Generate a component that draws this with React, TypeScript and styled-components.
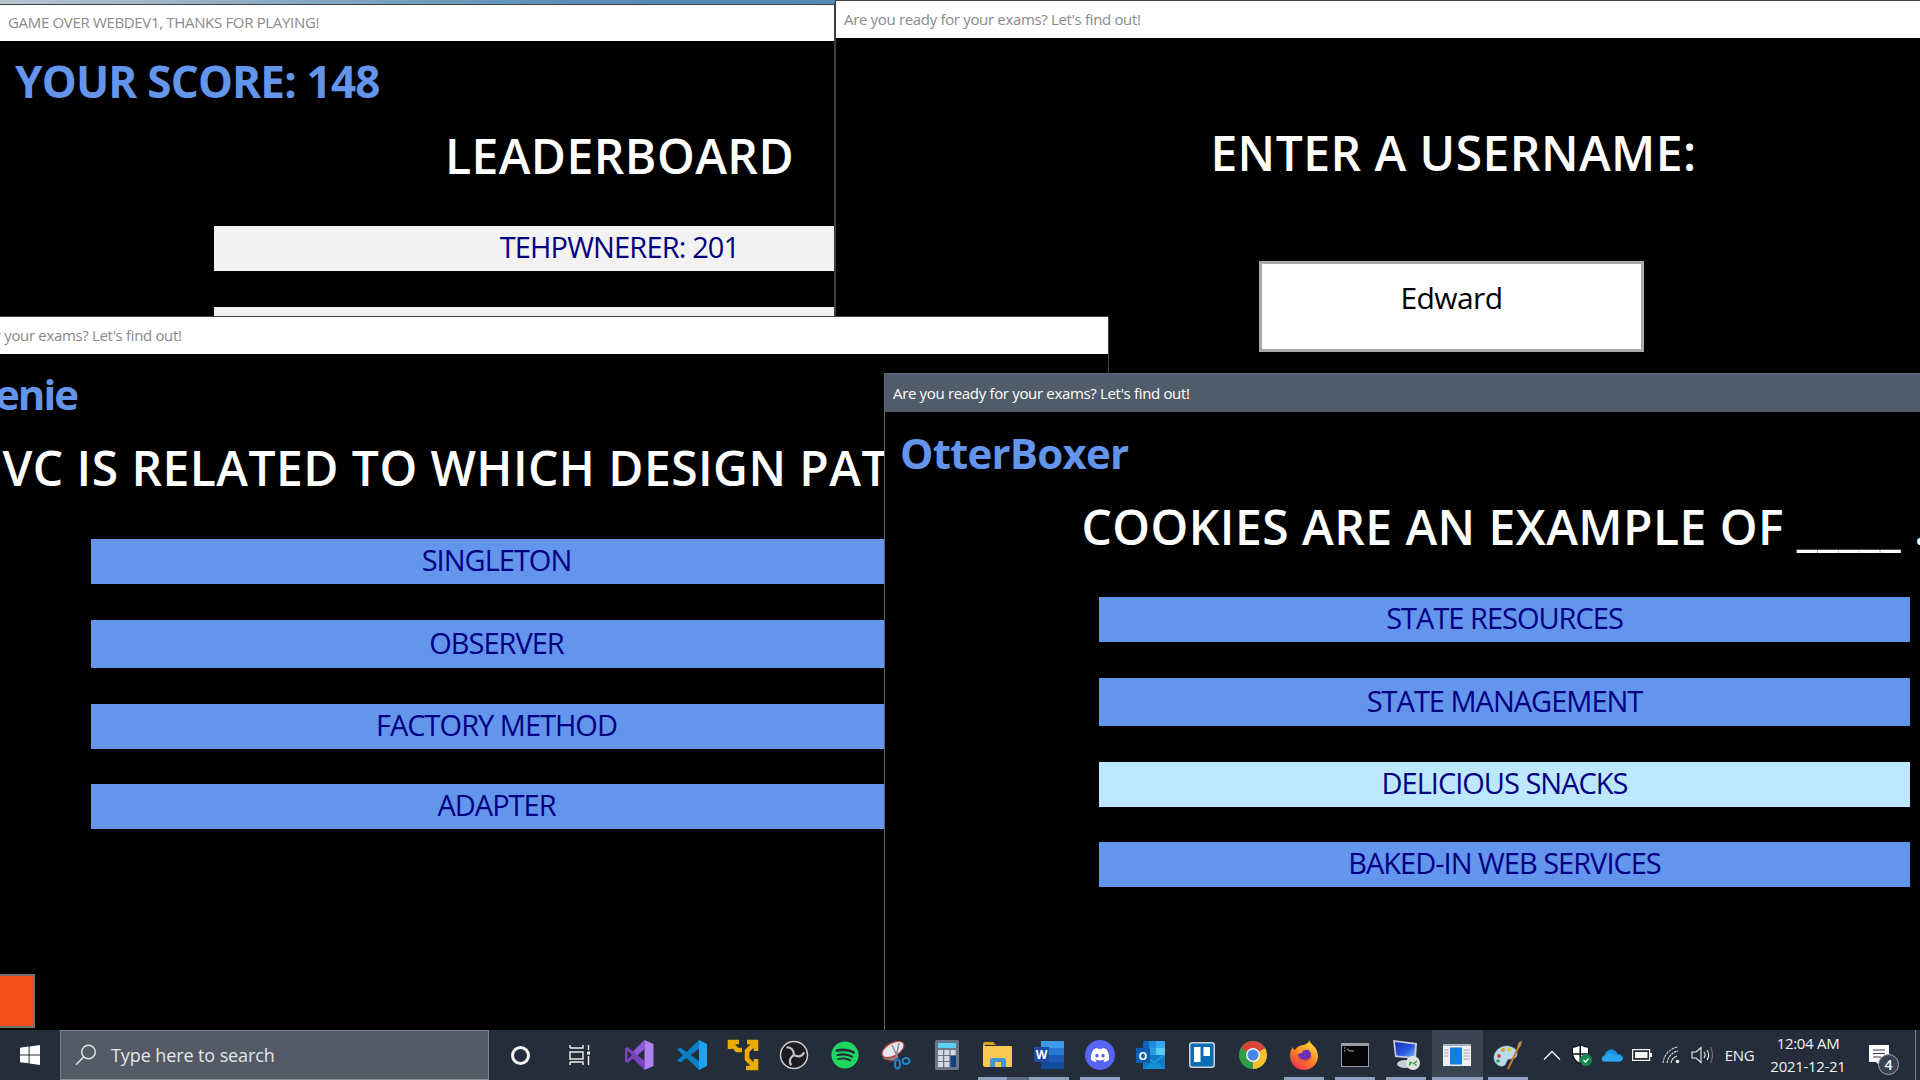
import React from 'react';
import styled, { createGlobalStyle } from 'styled-components';
import { FaDiscord, FaSpotify } from 'react-icons/fa';

const UI_FONT = '"Open Sans", "Noto Sans", "Liberation Sans", sans-serif';

const GlobalStyle = createGlobalStyle`
    html, body {
        margin: 0;
        padding: 0;
        background: #000;
        overflow: hidden;
    }
    * {
        box-sizing: border-box;
    }
`;

const App = () => {
    const pinnedApps = [
        { name: 'vs', icon: <VisualStudioIcon /> },
        { name: 'code', icon: <VsCodeIcon /> },
        { name: 'vagrant', icon: <BracketIcon /> },
        { name: 'obs', icon: <ObsIcon /> },
        { name: 'spotify', icon: <FaSpotify size={28} color="#1ed760" /> },
        { name: 'snip', icon: <SnipIcon /> },
        { name: 'calc', icon: <CalcIcon /> },
        { name: 'explorer', icon: <FolderIcon />, open: true, stacked: true },
        { name: 'word', icon: <WordIcon />, open: true },
        {
            name: 'discord',
            icon: (
                <DiscordBadge>
                    <FaDiscord size={20} color="#fff" />
                </DiscordBadge>
            ),
            open: true,
        },
        { name: 'outlook', icon: <OutlookIcon /> },
        { name: 'trello', icon: <TrelloIcon /> },
        { name: 'chrome', icon: <ChromeIcon /> },
        { name: 'firefox', icon: <FirefoxIcon />, open: true },
        { name: 'terminal', icon: <TerminalIcon />, open: true },
        { name: 'rdp', icon: <RemoteIcon />, open: true },
        { name: 'app', icon: <AppWindowIcon />, open: true, active: true },
        { name: 'paint', icon: <PaintIcon />, open: true },
    ];

    return (
        <>
            <GlobalStyle />
            <Page>
                <Desktop>
                    <Wallpaper />

                    <Window $left={-1} $top={4} $width={836} $height={330} $z={1}>
                        <TitleBar $height={36}>GAME OVER WEBDEV1, THANKS FOR PLAYING!</TitleBar>
                        <Player $top={10} $size={44}>YOUR SCORE: 148</Player>
                        <Column>
                            <Heading $top={12}>LEADERBOARD</Heading>
                            <ScoreRow $top={37}>TEHPWNERER: 201</ScoreRow>
                            <ScoreRow $top={36} />
                        </Column>
                    </Window>

                    <Window $left={835} $top={0} $width={1090} $height={400} $z={2}>
                        <TitleBar $height={37}>Are you ready for your exams? Let&apos;s find out!</TitleBar>
                        <Column $offset={212}>
                            <Heading $top={82}>ENTER A USERNAME:</Heading>
                            <UsernameBox>Edward</UsernameBox>
                        </Column>
                    </Window>

                    <Window $left={-124} $top={316} $width={1233} $height={720} $z={3}>
                        <TitleBar $height={37}>Are you ready for your exams? Let&apos;s find out!</TitleBar>
                        <Player $top={10} $indent={118} $spacing={-2}>enie</Player>
                        <Column>
                            <Heading $top={11}>MVC IS RELATED TO WHICH DESIGN PATTERN?</Heading>
                            <Answers $top={38}>
                                <Answer>SINGLETON</Answer>
                                <Answer $tall>OBSERVER</Answer>
                                <Answer>FACTORY METHOD</Answer>
                                <Answer>ADAPTER</Answer>
                            </Answers>
                        </Column>
                        <TimerBlock />
                    </Window>

                    <Window $left={884} $top={373} $width={1040} $height={670} $z={4} $focused>
                        <TitleBar $height={38} $focused>Are you ready for your exams? Let&apos;s find out!</TitleBar>
                        <Player $top={11}>OtterBoxer</Player>
                        <Column>
                            <Heading $top={11}>COOKIES ARE AN EXAMPLE OF _____ .</Heading>
                            <Answers $top={37}>
                                <Answer>STATE RESOURCES</Answer>
                                <Answer $tall>STATE MANAGEMENT</Answer>
                                <Answer $hovered>DELICIOUS SNACKS</Answer>
                                <Answer>BAKED-IN WEB SERVICES</Answer>
                            </Answers>
                        </Column>
                    </Window>
                </Desktop>

                <Taskbar>
                    <StartButton>
                        <WindowsIcon />
                    </StartButton>
                    <SearchBox>
                        <SearchIcon />
                        <span>Type here to search</span>
                    </SearchBox>
                    <ShellSlot $width={62}>
                        <CortanaRing />
                    </ShellSlot>
                    <ShellSlot $width={58}>
                        <TaskViewIcon />
                    </ShellSlot>
                    <PinnedApps>
                        {pinnedApps.map((app) => (
                            <AppSlot key={app.name} $open={app.open} $active={app.active} $stacked={app.stacked}>
                                {app.icon}
                            </AppSlot>
                        ))}
                    </PinnedApps>
                    <Tray>
                        <TraySlot><ChevronIcon /></TraySlot>
                        <TraySlot><ShieldIcon /></TraySlot>
                        <TraySlot><OneDriveIcon /></TraySlot>
                        <TraySlot><BatteryIcon /></TraySlot>
                        <TraySlot><WifiIcon /></TraySlot>
                        <TraySlot><VolumeIcon /></TraySlot>
                        <Language>ENG</Language>
                        <Clock>
                            <span>12:04 AM</span>
                            <span>2021-12-21</span>
                        </Clock>
                        <Notifications>
                            <NotificationIcon />
                            <NotificationCount>4</NotificationCount>
                        </Notifications>
                        <ShowDesktop />
                    </Tray>
                </Taskbar>
            </Page>
        </>
    );
};

export default App;

function WindowsIcon() {
    return (
        <svg width="20" height="20" viewBox="0 0 20 20" fill="#fff">
            <path d="M0 2.8 8.6 1.6V9.4H0ZM9.6 1.5 20 0V9.4H9.6ZM0 10.4H8.6V18.3L0 17.2ZM9.6 10.4H20V20L9.6 18.5Z" />
        </svg>
    );
}

function SearchIcon() {
    return (
        <svg width="22" height="22" viewBox="0 0 22 22" fill="none" stroke="#e6e8eb" strokeWidth="1.4">
            <circle cx="13.5" cy="8" r="6.8" />
            <path d="M8.6 13 1 20.8" />
        </svg>
    );
}

function TaskViewIcon() {
    return (
        <svg width="22" height="20" viewBox="0 0 22 20" fill="none" stroke="#f2f2f2" strokeWidth="1.4">
            <path d="M1 3H14V0M1 3V0M1 17H14V20M1 17V20" />
            <rect x="1" y="7" width="13" height="7" />
            <path d="M19.5 0V5M19.5 11V20" />
            <rect x="18" y="6.5" width="3" height="3" fill="#f2f2f2" stroke="none" />
        </svg>
    );
}

function VisualStudioIcon() {
    return (
        <svg width="32" height="32" viewBox="2.5 0 32 32">
            <path d="M22 1 10.5 12.5 5 8 1 10V22L5 24 10.5 19.5 22 31 22 22 15 16 22 10Z" fill="#7a43c0" />
            <path d="M5 11.5V20.5L9.5 16Z" fill="#252d3a" />
            <path d="M22 1 31 5V27L22 31Z" fill="#b07ff0" />
            <path d="M22 1 22 10 15 16 10.5 12.5Z" fill="#8e5bd8" />
        </svg>
    );
}

function VsCodeIcon() {
    return (
        <svg width="32" height="32" viewBox="0 0 32 32">
            <path d="M23 1 10.5 13 4.5 8.5 1 10.5 7 16 1 21.5 4.5 23.5 10.5 19 23 31V22L14.5 16 23 10Z" fill="#0a7fc6" />
            <path d="M23 1 31 5V27L23 31Z" fill="#1fa3f0" />
        </svg>
    );
}

function BracketIcon() {
    return (
        <svg width="32" height="32" viewBox="0 0 32 32" fill="none" stroke="#e8ad00" strokeWidth="4.6">
            <path d="M3 10V3H12M4 4 10 11H15" />
            <path d="M20 3H29V12M28 4 20 12V20L28 28" />
            <path d="M19 29H29V20" />
        </svg>
    );
}

function ObsIcon() {
    const blade = 'M15 15C15 10 12 7 7.5 7.5';
    return (
        <svg width="30" height="30" viewBox="0 0 30 30" fill="none">
            <circle cx="15" cy="15" r="13.5" fill="#1c1b1f" stroke="#cfcfcf" strokeWidth="1.5" />
            <path d={blade} stroke="#c4c4c8" strokeWidth="2.2" />
            <path d={blade} stroke="#c4c4c8" strokeWidth="2.2" transform="rotate(120 15 15)" />
            <path d={blade} stroke="#c4c4c8" strokeWidth="2.2" transform="rotate(240 15 15)" />
        </svg>
    );
}

function SnipIcon() {
    return (
        <svg width="30" height="30" viewBox="0 0 30 30" fill="none">
            <path d="M1 14 3 19 12 21 17 17Z" fill="#85858a" stroke="#b84a4a" strokeWidth="0.8" />
            <ellipse cx="12" cy="9.5" rx="12" ry="6.5" transform="rotate(-30 12 9.5)" fill="#e4e6ea" stroke="#c93b3b" strokeWidth="1.2" />
            <path d="M11 5 17 18M18 3 15 17" stroke="#8a8d92" strokeWidth="1.5" />
            <ellipse cx="16.5" cy="24" rx="2.5" ry="4.5" stroke="#1f86c8" strokeWidth="2" />
            <ellipse cx="25" cy="21" rx="3.5" ry="3" stroke="#1f86c8" strokeWidth="2" />
        </svg>
    );
}

function CalcIcon() {
    return (
        <svg width="24" height="30" viewBox="0 0 24 30">
            <rect width="24" height="30" rx="1.5" fill="#6b7684" />
            <rect x="3" y="3" width="18" height="5" fill="#5ad0f0" />
            {[0, 1, 2].map((row) =>
                [0, 1, 2].map((col) =>
                    col === 2 && row > 0 ? null : (
                        <rect key={`${row}-${col}`} x={3 + col * 6.3} y={10 + row * 6} width="5" height="5" fill="#d4dae0" />
                    ),
                ),
            )}
            <rect x="15.6" y="16" width="5.4" height="11" fill="#123f86" />
        </svg>
    );
}

function FolderIcon() {
    return (
        <svg width="30" height="28" viewBox="0 0 30 28">
            <path d="M0 3Q0 1 2 1H10L13 4H2V6H0Z" fill="#dba122" />
            <path d="M0 5H28Q29 5 29 6V25Q29 26 28 26H2Q0 26 0 24Z" fill="#f7c950" />
            <path d="M7 26V19Q7 17 9 17H21Q23 17 23 19V26H18V21H12V26Z" fill="#3f95d8" />
        </svg>
    );
}

function WordIcon() {
    return (
        <svg width="30" height="30" viewBox="0 0 30 30">
            <rect x="7" y="1" width="23" height="7" fill="#3f9be8" />
            <rect x="7" y="8" width="23" height="7" fill="#2a78d4" />
            <rect x="7" y="15" width="23" height="7" fill="#1a5cb5" />
            <rect x="7" y="22" width="23" height="7" fill="#124a9a" />
            <rect x="0" y="7" width="15" height="15" fill="#1b4ea2" />
            <text x="7.5" y="19" textAnchor="middle" fontSize="12" fontWeight="700" fontFamily={UI_FONT} fill="#fff">W</text>
        </svg>
    );
}

function OutlookIcon() {
    return (
        <svg width="30" height="30" viewBox="0 0 30 30">
            <rect x="7" y="1" width="20" height="15" fill="#0c64b8" />
            <rect x="13" y="1" width="7" height="7" fill="#1c8ce0" />
            <rect x="20" y="1" width="9" height="7" fill="#32a8ee" />
            <rect x="20" y="8" width="9" height="7" fill="#58cdf4" />
            <rect x="13" y="8" width="7" height="7" fill="#2a9be4" />
            <path d="M7 15 29 15V29H7Z" fill="#0f7cc9" />
            <path d="M7 15 18 23 29 15V14L18 22 7 14Z" fill="#37b4ee" />
            <path d="M7 29 18 21 29 29Z" fill="#1490df" />
            <rect x="0" y="8" width="14" height="15" fill="#0a5db0" />
            <text x="7" y="20" textAnchor="middle" fontSize="11" fontWeight="700" fontFamily={UI_FONT} fill="#fff">O</text>
        </svg>
    );
}

function TrelloIcon() {
    return (
        <svg width="26" height="26" viewBox="0 0 26 26">
            <rect x="0.75" y="0.75" width="24.5" height="24.5" rx="2.5" fill="#0a6cb4" stroke="#cbd1d8" strokeWidth="1.5" />
            <rect x="5" y="5" width="6.5" height="15" fill="#fff" />
            <rect x="14.5" y="5" width="6.5" height="9" fill="#fff" />
        </svg>
    );
}

function ChromeIcon() {
    return (
        <svg width="28" height="28" viewBox="0 0 28 28">
            <circle cx="14" cy="14" r="14" fill="#2f9e4a" />
            <path d="M14 14 26.1 7A14 14 0 0 1 14 28Z" fill="#fbc02d" />
            <path d="M14 14 1.9 7A14 14 0 0 1 26.1 7Z" fill="#db4437" />
            <circle cx="14" cy="14" r="7" fill="#f1f3f4" />
            <circle cx="14" cy="14" r="5.5" fill="#4a86e8" />
        </svg>
    );
}

function FirefoxIcon() {
    return (
        <svg width="30" height="30" viewBox="0 0 30 30">
            <defs>
                <linearGradient id="foxFlame" x1="0.8" y1="0" x2="0.2" y2="1">
                    <stop offset="0" stopColor="#ffdf3a" />
                    <stop offset="0.5" stopColor="#ff8a25" />
                    <stop offset="1" stopColor="#f0274f" />
                </linearGradient>
            </defs>
            <path d="M20 0C21 4 29 7 29 16A14 14 0 0 1 1 16C1 12 2 9 4 7 4 9 5 10 6 10 8 6 13 5 15 5 17 4 20 3 20 0Z" fill="url(#foxFlame)" />
            <circle cx="15.5" cy="15" r="6.5" fill="#6b2fb3" />
            <path d="M9 9C11 7 16 7 20 10 16 9 13 11 13 13L8 14Z" fill="#ff9a2e" />
            <path d="M8 14C10 21 19 22 23 16 22 24 9 25 8 14Z" fill="#ff5a2c" />
        </svg>
    );
}

function TerminalIcon() {
    return (
        <svg width="28" height="24" viewBox="0 0 28 24">
            <rect width="28" height="24" fill="#9a9ca0" />
            <rect x="1" y="3" width="26" height="20" fill="#050505" />
            <path d="M3 5H4.5M3 8H4.5M6 6 9 8H13" stroke="#b8b8b8" fill="none" />
        </svg>
    );
}

function RemoteIcon() {
    return (
        <svg width="30" height="32" viewBox="0 0 30 32">
            <defs>
                <linearGradient id="rdpScreen" x1="0" y1="0" x2="1" y2="1">
                    <stop offset="0" stopColor="#1a2bb8" />
                    <stop offset="0.6" stopColor="#2c5de0" />
                    <stop offset="1" stopColor="#7fb3f5" />
                </linearGradient>
            </defs>
            <path d="M2 1 26 4 25 20 4 18Z" fill="#c5ccd6" />
            <path d="M4 3 24 5.5 23 18 5.5 16.5Z" fill="url(#rdpScreen)" />
            <ellipse cx="14" cy="25" rx="8" ry="4" fill="#c9ced3" />
            <circle cx="22" cy="24" r="7" fill="#dfe3de" />
            <path d="M18 26 21 23M22 25 26 22M18.5 23 20 25M24 25 25.5 26.5" stroke="#1f9e3f" strokeWidth="1.4" fill="none" />
        </svg>
    );
}

function AppWindowIcon() {
    return (
        <svg width="28" height="22" viewBox="0 0 28 22">
            <rect width="28" height="22" fill="#eef1f4" />
            <rect width="28" height="2" fill="#a8afb8" />
            <rect x="7" y="3.5" width="12" height="17" fill="#0f7fe0" />
            <path d="M1.5 6H5.5M1.5 9H5.5M1.5 12H5.5M20.5 6H26.5M20.5 9H26.5M20.5 12H26.5M20.5 15H26.5" stroke="#9aa2ab" fill="none" />
        </svg>
    );
}

function PaintIcon() {
    return (
        <svg width="30" height="30" viewBox="0 0 30 30">
            <path d="M1 19C0 11 8 5 15 6 21 7 25 10 24 15 23 19 19 19 16 19 13 20 14 23 12 25 8 28 2 25 1 19Z" fill="#b8dcec" stroke="#7aa6bb" strokeWidth="0.6" />
            <circle cx="6" cy="16" r="2" fill="#d94a3c" />
            <circle cx="10" cy="10" r="2" fill="#e8a020" />
            <circle cx="16" cy="9.5" r="2" fill="#e8c820" />
            <circle cx="5" cy="21" r="1.8" fill="#3ca050" />
            <path d="M15 29 26 6" stroke="#c97a20" strokeWidth="2" />
            <path d="M24 7 26 2 29 1 28 6 26 8Z" fill="#b58a5a" />
        </svg>
    );
}

function ChevronIcon() {
    return (
        <svg width="18" height="10" viewBox="0 0 18 10" fill="none" stroke="#f2f2f2" strokeWidth="1.3">
            <path d="M1 9.5 9 1.5 17 9.5" />
        </svg>
    );
}

function ShieldIcon() {
    return (
        <svg width="22" height="24" viewBox="0 0 22 24">
            <path d="M9.5 1C7 3 4 3.5 1 3.5V11C1 16 5 19.5 9.5 21.5 14 19.5 18 16 18 11V3.5C15 3.5 12 3 9.5 1Z" fill="#111" />
            <path d="M9 2.5C7 3.8 5 4.5 2 4.8V10.5H9ZM10 11.5V20C13 18.5 16 15.5 17 11.5Z" fill="#fff" />
            <path d="M2.2 11.5C3 15.5 6 18.5 9 20V11.5ZM10 10.5H17V4.8C14 4.5 12 3.8 10 2.5Z" fill="#fff" />
            <path d="M9 1V21M1 11H18" stroke="#111" strokeWidth="1" />
            <circle cx="15" cy="17" r="6" fill="#128a4c" />
            <path d="M12.5 17 14.5 19 17.5 15.5" stroke="#fff" strokeWidth="1.3" fill="none" />
        </svg>
    );
}

function OneDriveIcon() {
    return (
        <svg width="22" height="14" viewBox="0 0 22 14">
            <path d="M3.5 13.5C0 13.5-.5 8 3.5 7.5 4.5 3.5 8 1 11.5 1.5 14 2 16 4 16.5 6 20 6 22 8.5 21.8 10.5 21.6 12.5 20 13.5 18.5 13.5Z" fill="#1a8fe0" />
            <path d="M7 6C9 4 13 5 14 7.5 17 7 20.5 8 21.8 10 21.6 12.5 20 13.5 18.5 13.5H3.5C1 13.5.5 11 1 10 3 8.5 5 7.5 7 6Z" fill="#2aa4ef" />
        </svg>
    );
}

function BatteryIcon() {
    return (
        <svg width="20" height="12" viewBox="0 0 20 12">
            <rect x="0.6" y="0.6" width="17" height="10.8" fill="none" stroke="#f2f2f2" strokeWidth="1.2" />
            <rect x="3" y="3" width="12.5" height="6" fill="#f2f2f2" />
            <rect x="18" y="4" width="2" height="4" fill="#f2f2f2" />
        </svg>
    );
}

function WifiIcon() {
    return (
        <svg width="20" height="20" viewBox="0 0 20 20" fill="none" stroke="#e2e4e7" strokeWidth="1.1">
            <path d="M1 18C2 9 9 3 16 2" strokeDasharray="2.5 0.8" />
            <path d="M5 18C6 12 10 7 16 6" strokeDasharray="2.5 0.8" />
            <path d="M9 18C9.5 15 12 12 15 11" />
            <circle cx="15.5" cy="16.5" r="1.8" fill="#e2e4e7" stroke="none" />
        </svg>
    );
}

function VolumeIcon() {
    return (
        <svg width="22" height="18" viewBox="0 0 22 18" fill="none" stroke="#eceef0" strokeWidth="1.1">
            <path d="M1 6H5L10 1.5V16.5L5 12H1Z" />
            <path d="M13 6C14.5 8 14.5 10 13 12" />
            <path d="M16 4C18 7 18 11 16 14" />
            <path d="M19.5 1C22 6 22 12 19.5 17" stroke="#6f7680" />
        </svg>
    );
}

function NotificationIcon() {
    return (
        <svg width="20" height="20" viewBox="0 0 20 20">
            <path d="M0 0H20V17H10V20L7 17H0Z" fill="#fff" />
            <path d="M4 5H16M4 8.5H16M4 12H12" stroke="#3a3f48" strokeWidth="1.2" />
        </svg>
    );
}

const Page = styled.div`
    width: 1920px;
    height: 1080px;
    display: flex;
    flex-direction: column;
    font-family: ${UI_FONT};
    overflow: hidden;
`;

const Desktop = styled.div`
    position: relative;
    flex: 1;
    background: #000;
    overflow: hidden;
`;

const Wallpaper = styled.div`
    height: 4px;
    background: linear-gradient(90deg, #b9c6cf, #5a8db8 30%, #4c86b6 60%, #7f9cb5);
`;

const Window = styled.section<{ $left: number; $top: number; $width: number; $height: number; $z: number; $focused?: boolean }>`
    position: absolute;
    left: ${(p) => p.$left}px;
    top: ${(p) => p.$top}px;
    width: ${(p) => p.$width}px;
    height: ${(p) => p.$height}px;
    z-index: ${(p) => p.$z};
    background: #000;
    border: 1px solid ${(p) => (p.$focused ? '#5e6873' : '#3c3f44')};
    overflow: hidden;
`;

const TitleBar = styled.header<{ $height: number; $focused?: boolean }>`
    height: ${(p) => p.$height}px;
    display: flex;
    align-items: center;
    padding-left: 8px;
    padding-bottom: ${(p) => (p.$focused ? 0 : 2)}px;
    font-size: 15px;
    letter-spacing: -0.33px;
    background: ${(p) => (p.$focused ? '#505c6a' : '#fff')};
    color: ${(p) => (p.$focused ? '#fff' : '#8a8a8a')};
`;

const Player = styled.div<{ $top: number; $indent?: number; $size?: number; $spacing?: number }>`
    margin-top: ${(p) => p.$top}px;
    padding-left: ${(p) => p.$indent ?? 15}px;
    font-size: ${(p) => p.$size ?? 42}px;
    line-height: 60px;
    font-weight: 700;
    color: #6495ed;
    letter-spacing: ${(p) => p.$spacing ?? -0.8}px;
    white-space: nowrap;
`;

const Column = styled.div<{ $offset?: number }>`
    width: 811px;
    margin-left: ${(p) => p.$offset ?? 214}px;
    display: flex;
    flex-direction: column;
`;

const Heading = styled.h1<{ $top: number }>`
    display: flex;
    justify-content: center;
    margin: ${(p) => p.$top}px 0 0;
    font-size: 48px;
    line-height: 66px;
    font-weight: 600;
    letter-spacing: 0.45px;
    color: #fff;
    white-space: nowrap;
`;

const ScoreRow = styled.div<{ $top: number }>`
    height: 45px;
    margin-top: ${(p) => p.$top}px;
    padding-bottom: 4px;
    display: flex;
    align-items: center;
    justify-content: center;
    background: #f2f2f2;
    color: #000080;
    font-size: 29px;
    letter-spacing: -0.85px;
`;

const UsernameBox = styled.div`
    width: 385px;
    height: 91px;
    margin-top: 75px;
    align-self: center;
    margin-right: 4px;
    padding-bottom: 18px;
    display: flex;
    align-items: center;
    justify-content: center;
    background: #fff;
    border: 3px solid #a9a9a9;
    color: #000;
    font-size: 30px;
    letter-spacing: -0.6px;
`;

const Answers = styled.div<{ $top: number }>`
    margin-top: ${(p) => p.$top}px;
    display: flex;
    flex-direction: column;
    gap: 35px;
`;

const Answer = styled.button<{ $tall?: boolean; $hovered?: boolean }>`
    height: ${(p) => (p.$tall ? 48 : 45)}px;
    padding: 0 0 4px;
    border: none;
    display: flex;
    align-items: center;
    justify-content: center;
    background: ${(p) => (p.$hovered ? '#bde7fd' : '#6495ed')};
    color: #000080;
    font-family: inherit;
    font-size: 29px;
    letter-spacing: -1px;
    &:nth-child(-n + 2) {
        margin-bottom: 1px;
    }
`;

const TimerBlock = styled.div`
    position: absolute;
    left: 100px;
    top: 657px;
    width: 58px;
    height: 54px;
    background: #f4511e;
    border: 2px solid #77706c;
`;

const Taskbar = styled.footer`
    height: 50px;
    display: flex;
    align-items: stretch;
    background: #252d3a;
    color: #f2f2f2;
    position: relative;
    z-index: 10;
`;

const StartButton = styled.div`
    width: 60px;
    display: flex;
    align-items: center;
    justify-content: center;
`;

const SearchBox = styled.div`
    width: 429px;
    display: flex;
    align-items: center;
    gap: 14px;
    padding-left: 14px;
    background: #535a65;
    border: 1px solid #7b8089;
    border-bottom-color: #8a8f97;
    color: #e3e6ea;
    font-size: 18px;
    letter-spacing: -0.1px;
`;

const ShellSlot = styled.div<{ $width: number }>`
    width: ${(p) => p.$width}px;
    display: flex;
    align-items: center;
    justify-content: center;
`;

const CortanaRing = styled.div`
    width: 19px;
    height: 19px;
    border: 3px solid #f4f4f4;
    border-radius: 50%;
`;

const PinnedApps = styled.div`
    margin-left: 6.5px;
    display: flex;
`;

const AppSlot = styled.div<{ $open?: boolean; $active?: boolean; $stacked?: boolean }>`
    position: relative;
    width: 51px;
    display: flex;
    align-items: center;
    justify-content: center;
    background: ${(p) => (p.$active ? '#3a4452' : 'transparent')};
    &::after {
        content: '';
        display: ${(p) => (p.$open ? 'block' : 'none')};
        position: absolute;
        bottom: 0;
        left: ${(p) => (p.$active ? 0 : 5.5)}px;
        right: ${(p) => (p.$active ? 0 : p.$stacked ? -5 : 5.5)}px;
        height: 3px;
        background: ${(p) =>
            p.$stacked ? 'linear-gradient(90deg, #8ea0bc 0 29px, #5d6a7d 29px)' : '#8ea0bc'};
    }
`;

const DiscordBadge = styled.div`
    width: 30px;
    height: 30px;
    border-radius: 50%;
    background: #5865f2;
    display: flex;
    align-items: center;
    justify-content: center;
`;

const Tray = styled.div`
    margin-left: 3.5px;
    display: flex;
    flex: 1;
    align-items: stretch;
`;

const TraySlot = styled.div`
    width: 30px;
    display: flex;
    align-items: center;
    justify-content: center;
`;

const Language = styled.div`
    width: 45px;
    display: flex;
    align-items: center;
    justify-content: center;
    font-size: 15px;
    letter-spacing: -0.3px;
`;

const Clock = styled.div`
    width: 92px;
    display: flex;
    flex-direction: column;
    align-items: center;
    justify-content: center;
    font-size: 15px;
    line-height: 23px;
    letter-spacing: -0.3px;
`;

const Notifications = styled.div`
    position: relative;
    width: 61px;
    padding: 15px 0 0 15px;
`;

const NotificationCount = styled.span`
    position: absolute;
    left: 24px;
    top: 24px;
    width: 21px;
    height: 21px;
    display: flex;
    align-items: center;
    justify-content: center;
    border-radius: 50%;
    background: #3a4250;
    border: 1px solid #a5aab2;
    color: #fff;
    font-size: 14px;
    font-weight: 600;
`;

const ShowDesktop = styled.div`
    width: 1px;
    background: #7a808a;
`;
